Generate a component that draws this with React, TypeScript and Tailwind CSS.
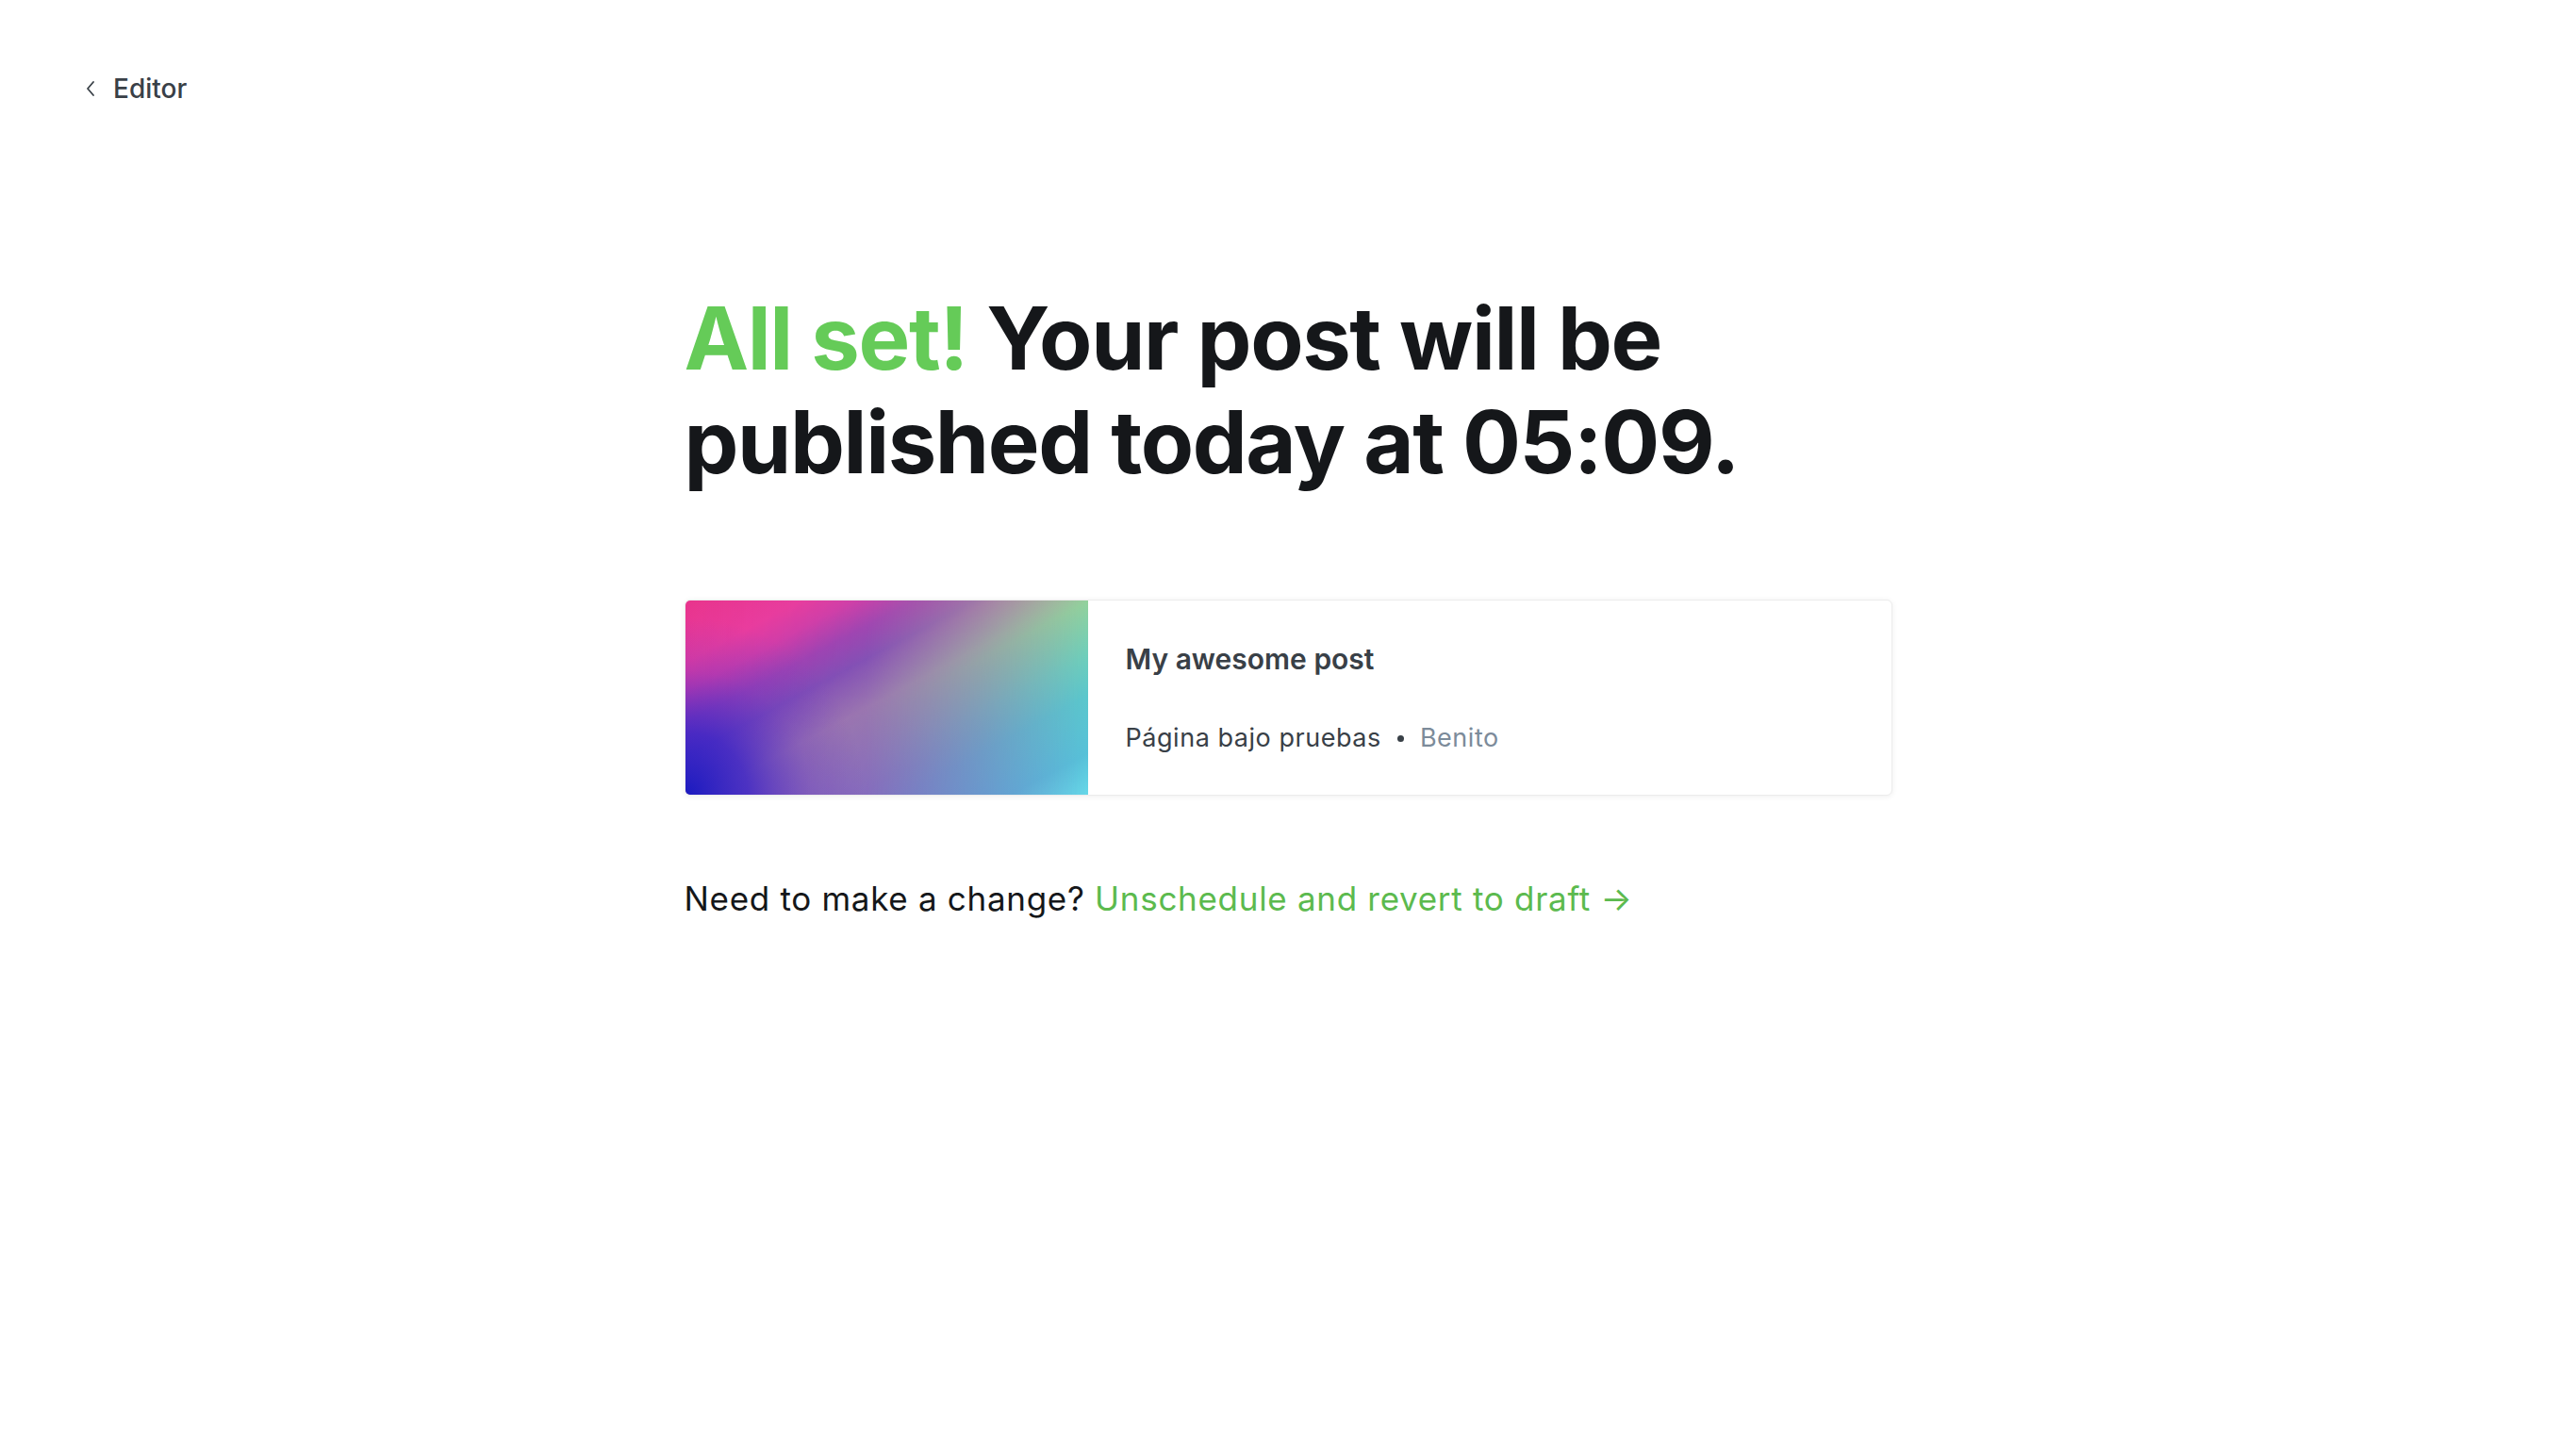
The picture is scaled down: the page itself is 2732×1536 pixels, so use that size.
function CoverImage() {
  return (
    <svg viewBox="0 0 427 208" preserveAspectRatio="none" className="block h-full w-full">
      <defs>
        <linearGradient id="coverA" gradientUnits="userSpaceOnUse" x1="0" y1="0" x2="184" y2="339">
          <stop offset="0" stopColor="#e8358c" />
          <stop offset="0.15" stopColor="#ea3a9f" />
          <stop offset="0.22" stopColor="#d23aaa" />
          <stop offset="0.3" stopColor="#9a3cb6" />
          <stop offset="0.38" stopColor="#7a44ba" />
          <stop offset="0.5" stopColor="#9a68b4" />
          <stop offset="0.7" stopColor="#8c5cbc" />
          <stop offset="1" stopColor="#7c60c8" />
        </linearGradient>
        <linearGradient id="coverB" gradientUnits="userSpaceOnUse" x1="0" y1="0" x2="184" y2="339">
          <stop offset="0" stopColor="#e8508f" />
          <stop offset="0.22" stopColor="#c46a9a" />
          <stop offset="0.32" stopColor="#c08a98" />
          <stop offset="0.4" stopColor="#bea89a" />
          <stop offset="0.53" stopColor="#92d29c" />
          <stop offset="0.66" stopColor="#6ecfba" />
          <stop offset="0.76" stopColor="#5ac8cc" />
          <stop offset="0.9" stopColor="#56c2d8" />
          <stop offset="1" stopColor="#66d8e8" />
        </linearGradient>
        <linearGradient id="coverMask" x1="0" y1="0" x2="1" y2="0">
          <stop offset="0" stopColor="#000" />
          <stop offset="0.45" stopColor="#262626" />
          <stop offset="0.75" stopColor="#999" />
          <stop offset="1" stopColor="#fff" />
        </linearGradient>
        <radialGradient id="coverBlue" gradientUnits="userSpaceOnUse" cx="0" cy="208" r="190">
          <stop offset="0" stopColor="#1a1ac0" stopOpacity="1" />
          <stop offset="0.35" stopColor="#3a24c6" stopOpacity="0.8" />
          <stop offset="0.7" stopColor="#5a34c4" stopOpacity="0.25" />
          <stop offset="1" stopColor="#6a40c0" stopOpacity="0" />
        </radialGradient>
        <mask id="coverBlend">
          <rect width="427" height="208" fill="url(#coverMask)" />
        </mask>
      </defs>
      <rect width="427" height="208" fill="url(#coverA)" />
      <rect width="427" height="208" fill="url(#coverB)" mask="url(#coverBlend)" />
      <rect width="427" height="208" fill="url(#coverBlue)" />
    </svg>
  );
}

export default function App() {
  return (
    <div className="min-h-screen w-full bg-white font-['Inter',sans-serif] text-[#15171a]">
      <header className="flex items-center pl-[92px] pt-[78px]">
        <a className="flex items-center gap-[20px] text-[28px] font-medium leading-[32px] text-[#394047]" href="#">
          <svg width="8" height="16" viewBox="0 0 8 16" fill="none" stroke="currentColor" strokeWidth="1.8" strokeLinecap="round" strokeLinejoin="round">
            <polyline points="7,1 1,8 7,15" />
          </svg>
          Editor
        </a>
      </header>

      <main className="mx-auto w-[1281px] pt-[194px]">
        <h1 className="text-[92px] font-bold leading-[110px] tracking-[-0.015em]">
          <span className="text-[#65cb58]">All set!</span> Your post will be
          <br />
          published today at 05:09.
        </h1>

        <div className="mt-[112px] flex h-[208px] overflow-hidden rounded-[6px] border border-[#ececec] bg-white shadow-[0_1px_6px_rgba(0,0,0,0.07)]">
          <div className="w-[427px] shrink-0">
            <CoverImage />
          </div>
          <div className="flex flex-1 flex-col justify-center gap-[50px] pl-[40px]">
            <div className="text-[30px] font-semibold leading-[36px] text-[#394047]">My awesome post</div>
            <div className="flex items-center text-[27px] leading-[32px] tracking-[0.02em]">
              <span className="text-[#394047]">Página bajo pruebas</span>
              <span className="mx-[17px] inline-block h-[7px] w-[7px] rounded-full bg-[#394047]" />
              <span className="text-[#7c8b9a]">Benito</span>
            </div>
          </div>
        </div>

        <p className="mt-[85px] text-[35px] leading-[1.4] tracking-[0.02em] text-[#15171a]">
          Need to make a change?{" "}
          <a href="#" className="text-[#5cba4e]">
            Unschedule and revert to draft →
          </a>
        </p>
      </main>
    </div>
  );
}
